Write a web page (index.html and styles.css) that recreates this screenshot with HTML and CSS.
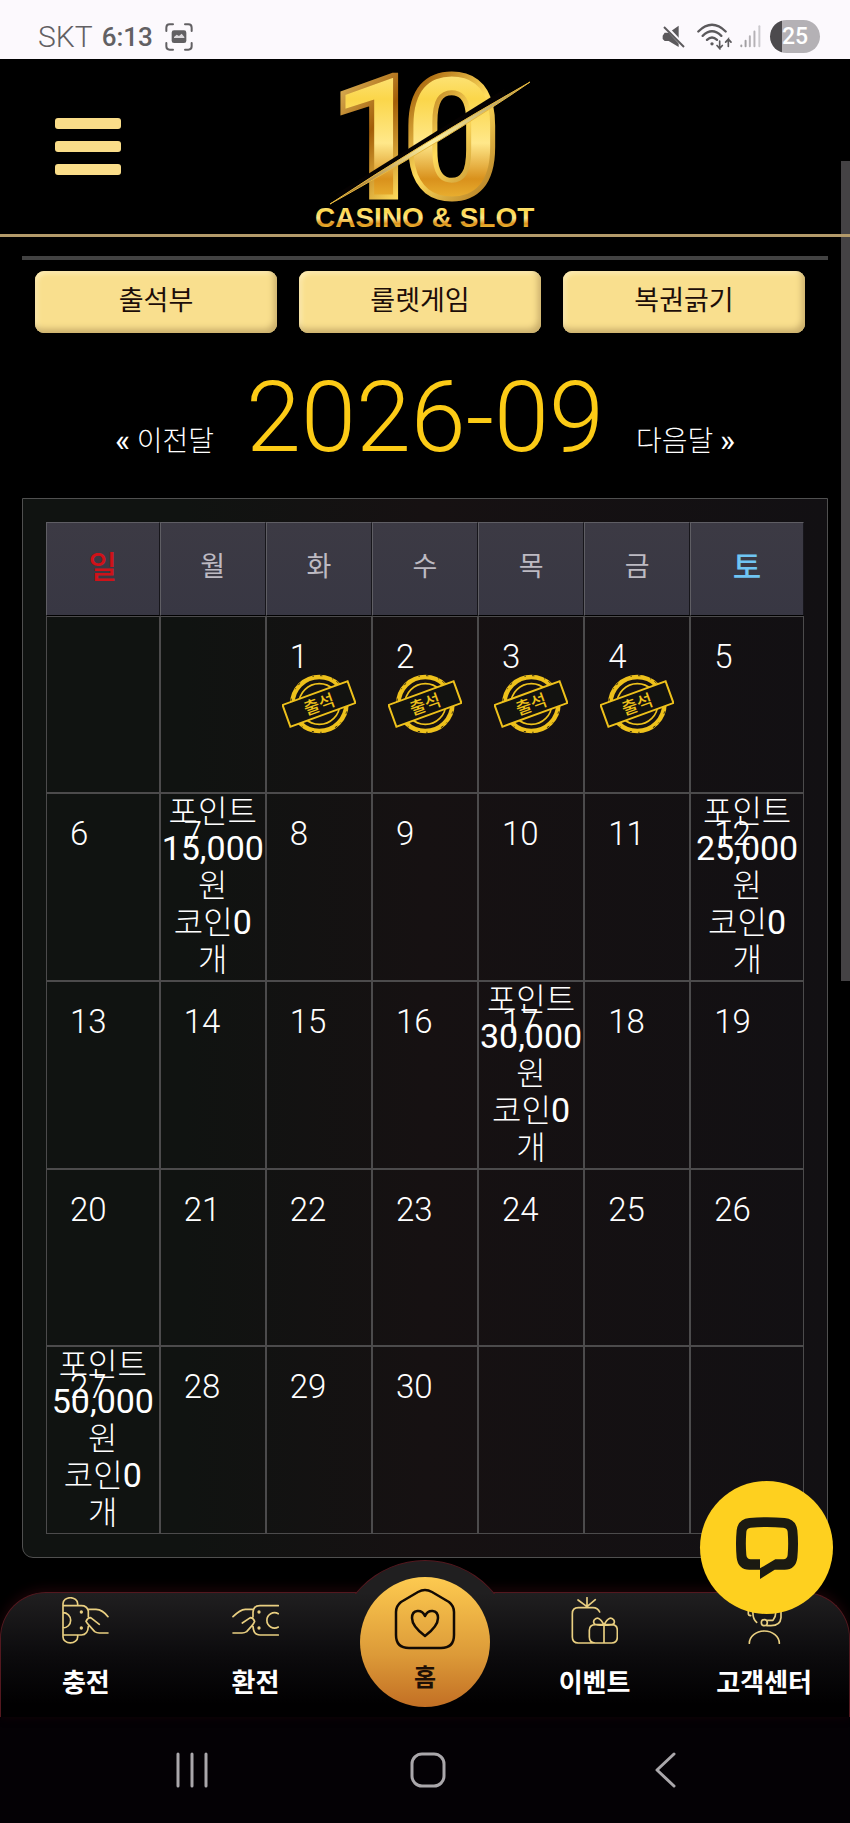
FILE: index.html
```html
<!DOCTYPE html>
<html lang="ko">
<head>
<meta charset="utf-8">
<meta name="viewport" content="width=device-width, initial-scale=1">
<title>출석부</title>
<link rel="stylesheet" href="styles.css">
</head>
<body>
<svg class="defs" aria-hidden="true">
  <symbol id="stamp" viewBox="36 40 222 182">
    <g fill="none" stroke="#eec11b">
      <circle cx="148" cy="131" r="82" stroke-width="14"/>
      <circle cx="148" cy="131" r="62" stroke-width="5"/>
      <circle cx="148" cy="131" r="86" stroke="#2a2410" stroke-width="3" stroke-dasharray="4 19 7 31 3 12 9 43"/>
      <rect x="42" y="96" width="210" height="70" fill="#121210" stroke-width="6" transform="rotate(-20 147 131)"/>
    </g>
    <text x="147" y="151" text-anchor="middle" transform="rotate(-20 147 131)" class="stamp-text">출석</text>
  </symbol>
</svg>
<div class="screen">
  <div class="status">
    <span class="carrier">SKT</span>
    <span class="clock">6:13</span>
    <svg class="shot" viewBox="0 0 84 84" width="28" height="28"><g fill="none" stroke="#626063" stroke-width="6" stroke-linecap="round"><path d="M4 24V14Q4 4 14 4H24M60 4H70Q80 4 80 14V24M80 60V70Q80 80 70 80H60M24 80H14Q4 80 4 70V60"/></g><rect x="20" y="22" width="44" height="38" rx="7" fill="#626063"/><path d="M27 42L35 35L42 39L50 32L58 42V45H27Z" fill="#dcd9dd"/></svg>
    <span class="grow"></span>
    <svg class="mute" viewBox="0 0 72 72" width="24" height="24"><path fill="#5b595c" d="M2 32L8 23H20L50 2V66L20 48H8L2 42Z"/><path d="M10 4L70 68" stroke="#fcf9fd" stroke-width="12"/><path d="M6 6L66 66" stroke="#5b595c" stroke-width="6"/></svg>
    <svg class="wifi" viewBox="0 0 105 80" width="35" height="27"><g fill="none" stroke="#5b595c" stroke-width="7" stroke-linecap="round"><path d="M4 25Q45-15 86 25M17 38Q45 11 73 38M30 50Q45 36 60 50"/><path stroke-width="5" d="M68 54V76L60 67M68 76L76 67M94 70V48L86 57M94 48L102 57"/></g><circle cx="45" cy="62" r="5" fill="#5b595c"/></svg>
    <svg class="signal" viewBox="0 0 64 70" width="21" height="23" fill="none" stroke="#b5b2b6" stroke-width="6" stroke-linecap="round"><path d="M4 62V65M17 48V65" stroke="#a19fa2"/><path d="M30 34V65M44 20V65"/><path d="M59 4V65" stroke="#cbc9cd"/></svg>
    <span class="battery">25</span>
  </div>

  <header class="top">
    <button class="menu" type="button" aria-label="메뉴"><span></span><span></span><span></span></button>
    <a class="logo" href="#" aria-label="10 CASINO &amp; SLOT">
      <svg viewBox="310 68 226 165" width="226" height="165">
        <defs>
          <linearGradient id="gold" x1="0" y1="0" x2="0" y2="1"><stop offset="0" stop-color="#fff6b8"/><stop offset=".3" stop-color="#fbd64a"/><stop offset=".52" stop-color="#ffe88a"/><stop offset=".7" stop-color="#d9911c"/><stop offset=".88" stop-color="#f8cb42"/><stop offset="1" stop-color="#b8690c"/></linearGradient>
          <linearGradient id="edge" x1="0" y1="0" x2="1" y2="1"><stop offset="0" stop-color="#ffe98c"/><stop offset=".35" stop-color="#a35e08"/><stop offset=".6" stop-color="#ffdc5c"/><stop offset="1" stop-color="#8c4a04"/></linearGradient>
          <linearGradient id="blade" x1="0" y1="1" x2="1" y2="0"><stop offset="0" stop-color="#8a5512"/><stop offset=".5" stop-color="#fff2a2"/><stop offset="1" stop-color="#a58a4c"/></linearGradient>
        </defs>
        <text class="logo-number" y="197"><tspan x="327">1</tspan><tspan x="401">0</tspan></text>
        <path d="M334 194L502 89L505 96L338 200Z" fill="#050202"/>
        <path d="M328 204Q420 143 528 82Q450 136 328 204Z" fill="url(#blade)" stroke="#e7b940" stroke-width="1"/>
        <text class="logo-name" x="313" y="227">CASINO &amp; SLOT</text>
      </svg>
    </a>
  </header>

  <main>
    <hr>
    <nav class="tabs">
      <button type="button">출석부</button>
      <button type="button">룰렛게임</button>
      <button type="button">복권긁기</button>
    </nav>
    <div class="month">
      <a href="#"><b>«</b> 이전달</a>
      <h1>2026-09</h1>
      <a href="#">다음달 <b>»</b></a>
    </div>
    <section class="card">
      <table>
        <colgroup><col class="edge"><col span="5"><col class="edge"></colgroup>
        <thead><tr><th class="sun">일</th><th>월</th><th>화</th><th>수</th><th>목</th><th>금</th><th class="sat">토</th></tr></thead>
        <tbody>
          <tr><td></td><td></td>
            <td><p class="day">1</p><svg class="stamp" role="img" aria-label="출석"><use href="#stamp"/></svg></td>
            <td><p class="day">2</p><svg class="stamp" role="img" aria-label="출석"><use href="#stamp"/></svg></td>
            <td><p class="day">3</p><svg class="stamp" role="img" aria-label="출석"><use href="#stamp"/></svg></td>
            <td><p class="day">4</p><svg class="stamp" role="img" aria-label="출석"><use href="#stamp"/></svg></td>
            <td><p class="day">5</p></td></tr>
          <tr><td><p class="day">6</p></td>
            <td><div class="bonus"><p class="day">7</p><p class="prize">포인트<br><b>15,000</b><br>원<br>코인<b>0</b><br>개</p></div></td>
            <td><p class="day">8</p></td><td><p class="day">9</p></td><td><p class="day">10</p></td><td><p class="day">11</p></td>
            <td><div class="bonus"><p class="day">12</p><p class="prize">포인트<br><b>25,000</b><br>원<br>코인<b>0</b><br>개</p></div></td></tr>
          <tr><td><p class="day">13</p></td><td><p class="day">14</p></td><td><p class="day">15</p></td><td><p class="day">16</p></td>
            <td><div class="bonus"><p class="day">17</p><p class="prize">포인트<br><b>30,000</b><br>원<br>코인<b>0</b><br>개</p></div></td>
            <td><p class="day">18</p></td><td><p class="day">19</p></td></tr>
          <tr><td><p class="day">20</p></td><td><p class="day">21</p></td><td><p class="day">22</p></td><td><p class="day">23</p></td><td><p class="day">24</p></td><td><p class="day">25</p></td><td><p class="day">26</p></td></tr>
          <tr><td><div class="bonus"><p class="day">27</p><p class="prize">포인트<br><b>50,000</b><br>원<br>코인<b>0</b><br>개</p></div></td>
            <td><p class="day">28</p></td><td><p class="day">29</p></td><td><p class="day">30</p></td><td></td><td></td><td></td></tr>
        </tbody>
      </table>
    </section>
  </main>

  <nav class="dock">
    <span class="bump"></span>
    <a href="#"><svg class="icon" viewBox="0 0 141 141"><path d="M47 24V20A21 17 0 0 0 3 20V120A21 17 0 0 0 47 120V114M3 26H58Q75 26 79 42V60M79 88Q78 114 58 114H3M3 47A23 23 0 0 1 3 93M78 37H102Q122 38 138 59M112 82L86 62Q77 62 72 73Q76 80 84 88L98 104Q104 108 112 108H138"/><circle cx="58" cy="45" r="5"/><circle cx="58" cy="93" r="5"/></svg><span>충전</span></a>
    <a href="#"><svg class="icon" viewBox="0 0 141 141"><path d="M139 26H84Q64 26 63 46V60M63 88Q64 114 84 114H139M139 50A23 23 0 1 0 139 90M62 37H40Q24 38 3 59M31 78L55 62Q63 62 68 73Q66 80 58 88L44 104Q38 108 30 108H3"/><circle cx="81" cy="45" r="5"/><circle cx="81" cy="93" r="5"/></svg><span>환전</span></a>
    <a href="#" class="home"><span class="disc"><svg viewBox="0 0 62 62" width="62" height="62" fill="none" stroke="#120a04" stroke-width="2.5" stroke-linejoin="round"><path d="M24 4Q31 0 38 4L55 14Q60 18 60 24V47Q60 60 47 60H15Q2 60 2 47V24Q2 18 7 14Z"/><path d="M31 48C23 42 18 36 18 30C18 21 28 21 31 28C34 21 44 21 44 30C44 36 39 42 31 48Z"/></svg><span>홈</span></span></a>
    <a href="#"><svg class="icon" viewBox="0 0 141 141"><path d="M86 45Q80 32 66 32H22Q4 32 4 50V120Q4 138 22 138H73M48 29V2M48 29L21 9M48 29L73 8M73 83H122Q139 83 139 100V120Q139 138 122 138H73Q55 138 55 120V100Q55 83 73 83M99 84V138M99 84Q62 88 69 70Q82 52 99 84Q136 88 129 70Q116 52 99 84"/></svg><span>이벤트</span></a>
    <a href="#"><svg class="icon" viewBox="0 0 141 141"><path d="M25 139A45 37 0 0 1 115 139M36 42Q34 64 47 76M104 40Q106 58 96 70H80M22 42V50Q22 55 29 56M120 40V62Q118 86 90 86H78M24 36A46 32 0 0 1 116 36"/><circle cx="70" cy="77" r="9" class="ring"/></svg><span>고객센터</span></a>
  </nav>

  <footer class="sysbar">
    <button type="button" aria-label="최근 앱"><svg viewBox="0 0 36 36" width="36" height="36"><path d="M4 2V34M18 2V34M32 2V34"/></svg></button>
    <button type="button" aria-label="홈 화면"><svg viewBox="0 0 36 36" width="36" height="36"><rect x="2" y="2" width="32" height="32" rx="10"/></svg></button>
    <button type="button" aria-label="뒤로"><svg viewBox="0 0 36 36" width="36" height="36"><path d="M28 2L11 18L28 34"/></svg></button>
  </footer>

  <button class="chat" type="button" aria-label="채팅 상담"><svg viewBox="0 0 186 186" width="62" height="62"><path fill="#1b1a12" fill-rule="evenodd" d="M40 3Q93-2 146 3Q180 6 184 40Q188 80 184 122Q180 157 146 158H116L72 186V158H40Q6 157 2 122Q-2 80 2 40Q6 6 40 3ZM44 32Q93 28 142 32Q154 33 155 44Q158 80 155 114Q154 126 142 127H118L72 154V127H44Q32 126 31 114Q28 80 31 44Q32 33 44 32Z"/></svg></button>
  <span class="scrollbar"></span>
</div>
</body>
</html>
```

FILE: styles.css
```css
* { box-sizing: border-box; }
body {
  margin: 0;
  background: #000;
  color: #fff;
  font-family: Roboto, "Noto Sans CJK KR", sans-serif;
}
p, h1 { margin: 0; }
a { color: inherit; text-decoration: none; }
button { border: 0; padding: 0; background: none; font: inherit; cursor: pointer; }
.defs { position: absolute; width: 0; height: 0; }
.screen { position: relative; overflow: hidden; }

/* phone status bar */
.status {
  display: flex;
  align-items: center;
  height: 59px;
  padding: 14px 30px 0 38px;
  background: #fcf9fd;
  color: #626063;
  font-size: 30px;
}
.carrier { font-weight: 300; }
.clock { margin-left: 9px; font-size: 26px; font-weight: 500; }
.shot { margin-left: 12px; }
.grow { flex: 1; }
.wifi { margin-left: 11px; }
.signal { margin: 0 9px 0 8px; }
.battery {
  width: 50px;
  height: 33px;
  border-radius: 17px;
  background: linear-gradient(90deg, #4c4a4d 12px, #b4b1b5 12px);
  color: #fff;
  font-size: 23px;
  font-weight: 500;
  line-height: 33px;
  text-align: center;
}

/* site header */
.top {
  position: relative;
  z-index: 1;
  display: grid;
  grid-template-columns: 1fr auto 1fr;
  align-items: center;
  height: 178px;
  border-bottom: 3px solid #b39a6a;
}
.menu {
  display: grid;
  gap: 12px;
  width: 66px;
  margin-left: 55px;
}
.menu span { height: 11px; border-radius: 3px; background: #fadd89; }
.logo { padding-top: 8px; }
.logo svg { display: block; overflow: visible; }
.logo-number {
  font: bold 170px Roboto, sans-serif;
  fill: url(#gold);
  stroke: url(#edge);
  stroke-width: 5px;
}
.logo-name {
  font: bold 28px "Liberation Sans", sans-serif;
  fill: url(#gold);
}

main { padding: 19px 22px 0; }
hr { margin: 0; border: 0; height: 4px; background: #424242; }

.tabs {
  display: grid;
  grid-template-columns: repeat(3, 1fr);
  gap: 22px;
  padding: 11px 23px 0 13px;
}
.tabs button {
  height: 62px;
  padding-bottom: 8px;
  border-radius: 9px;
  background: #f9df8e;
  box-shadow: inset -3px -4px 6px #c9ae6b, inset 2px 2px 5px #fff0bd;
  color: #1c0d08;
  font-size: 27px;
}

.month {
  display: flex;
  justify-content: center;
  align-items: baseline;
  gap: 32px;
  margin: 36px 0 33px;
}
.month h1 {
  color: #fccb16;
  font-size: 99px;
  font-weight: 300;
  line-height: 96px;
}
.month a { font-size: 28px; font-weight: 300; line-height: 32px; }
.month b { font-size: 32px; font-weight: 400; line-height: 32px; }

/* calendar */
.card {
  padding: 23px;
  border: 1px solid #505050;
  border-radius: 0 0 11px 11px;
  background: linear-gradient(90deg, #101311 20%, #161112 50%, #121013);
}
table {
  width: 100%;
  table-layout: fixed;
  border-spacing: 0;
}
col { width: 14%; }
col.edge { width: 15%; }
th {
  height: 94px;
  padding: 0 0 9px;
  border: 1px solid;
  border-color: #5f5e64 #17161b #000 #5f5e64;
  background: linear-gradient(#3c3a44, #383743);
  color: #bdbac2;
  font-size: 27px;
  font-weight: 400;
}
.sun, .sat { font-size: 31px; font-weight: 500; }
.sun { color: #cf1219; }
.sat { color: #6fc5f3; }
td {
  height: 177px;
  padding: 0;
  border: 1px solid #4c4b4c;
  vertical-align: top;
}
.day {
  padding: 21px 0 0 23px;
  font-size: 33px;
  font-weight: 300;
  line-height: 37px;
}
.stamp { display: block; width: 74px; height: 60px; margin: -1px auto 0; }
.stamp-text { font: 500 52px "Noto Sans CJK KR", sans-serif; fill: #eec11b; }
.bonus { display: grid; }
.bonus > * { grid-area: 1 / 1; }
.prize {
  padding-bottom: 1px;
  font-size: 32px;
  font-weight: 300;
  line-height: 37px;
  text-align: center;
}
.prize b { font-size: 34px; font-weight: 400; line-height: 1; }

/* bottom dock */
.dock {
  position: relative;
  display: grid;
  grid-template-columns: repeat(5, 1fr);
  height: 125px;
  margin-top: 34px;
  border: 1px solid #54181f;
  border-bottom: 0;
  border-radius: 46px 46px 0 0;
  background: linear-gradient(#201f20, #0c0b0d 50%, #010001 90%);
  box-shadow: 0 -3px 12px #1c0508;
}
.dock a {
  display: flex;
  flex-direction: column;
  align-items: center;
  gap: 18px;
  padding-top: 4px;
  font-family: "Noto Sans CJK KR", sans-serif;
  font-size: 26px;
  font-weight: 700;
  line-height: 38px;
}
.icon {
  width: 47px;
  height: 47px;
  fill: none;
  stroke: #e9cf81;
  stroke-width: 5px;
  stroke-linecap: round;
  stroke-linejoin: round;
}
.icon circle { fill: #e9cf81; stroke: none; }
.icon .ring { fill: none; stroke: #e9cf81; }
.bump {
  position: absolute;
  top: -33px;
  left: 50%;
  width: 180px;
  height: 34px;
  margin-left: -90px;
  overflow: hidden;
}
.bump::before {
  content: "";
  display: block;
  height: 180px;
  border: 1px solid #54181f;
  border-radius: 50%;
  background: #201f20;
}
.home { position: relative; }
.dock .disc {
  position: absolute;
  top: -16px;
  display: flex;
  flex-direction: column;
  align-items: center;
  width: 130px;
  height: 130px;
  padding-top: 11px;
  border-radius: 50%;
  background: linear-gradient(#fdca50, #dc9a38 60%, #c26f24);
  color: #1d0f06;
  font-size: 24px;
}
.disc > span { margin-top: 7px; }

.sysbar {
  display: grid;
  grid-template-columns: repeat(3, 28%);
  justify-content: center;
  align-items: center;
  justify-items: center;
  height: 106px;
  padding-left: 6px;
  background: #040105;
}
.sysbar button { height: 36px; }
.sysbar svg { fill: none; stroke: #aaa7ab; stroke-width: 3px; stroke-linecap: round; stroke-linejoin: round; }

/* floating controls */
.chat {
  position: absolute;
  right: 17px;
  bottom: 209px;
  display: grid;
  place-items: center;
  width: 133px;
  height: 133px;
  border-radius: 50%;
  background: #fed01f;
}
.scrollbar {
  position: absolute;
  top: 161px;
  right: 0;
  width: 9px;
  height: 820px;
  background: #444244;
}
```
